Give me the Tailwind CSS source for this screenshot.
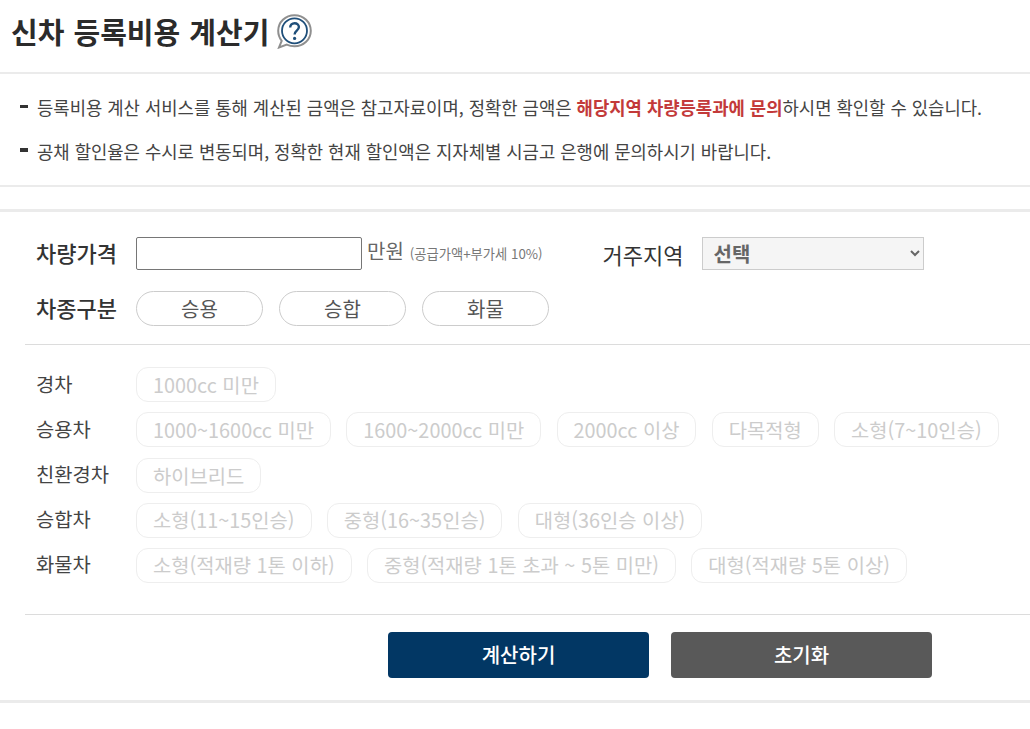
<!DOCTYPE html>
<html lang="ko">
<head>
    <meta charset="UTF-8">
    <title>신차 등록비용 계산기</title>
    <script src="https://cdn.jsdelivr.net/npm/@tailwindcss/browser@4"></script>
</head>
<body class="bg-white text-[#333] font-['Noto_Sans_CJK_KR','Noto_Sans',sans-serif] overflow-hidden">

    <!-- title -->
    <header class="h-[74px] border-b-2 border-[#ebebeb] pl-[11px] pt-[11px] flex items-start gap-[8px]">
        <h1 class="text-[29px] leading-[40px] font-bold text-[#2b2b2b] [word-spacing:1px]">신차 등록비용 계산기</h1>
        <svg class="mt-[3px]" width="35" height="35" viewBox="0 0 35 35" fill="none">
            <path d="M17.500 1.200C8.300 1.200 1.200 8 1.200 16.800c0 3.900 1.300 7.300 3.500 10L2 33.500l7.800-2.900c2.300 1.100 4.900 1.700 7.700 1.700 9.200 0 16.300-6.700 16.300-15.500S26.700 1.200 17.500 1.200z" fill="#fff" stroke="#8f8f8f" stroke-width="2"/>
            <circle cx="17.500" cy="16.800" r="12.500" stroke="#1f4f7a" stroke-width="1.800"/>
            <path d="M13.200 13.600c0-2.600 1.900-4.400 4.400-4.400s4.300 1.600 4.300 3.900c0 3.500-4.300 3.600-4.300 7.300" stroke="#1f4f7a" stroke-width="2.400"/>
            <circle cx="17.600" cy="24.400" r="1.600" fill="#1f4f7a"/>
        </svg>
    </header>

    <!-- notice -->
    <section class="h-[113px] border-b-2 border-[#ebebeb] pl-5 pt-[20px] text-[17.76px] leading-[26px] text-[#444]">
        <p class="flex items-start">
            <span class="w-[8px] h-[3px] bg-[#333] mt-[11px] mr-[9px]"></span>
            <span>등록비용 계산 서비스를 통해 계산된 금액은 참고자료이며, 정확한 금액은 <b class="font-bold text-[#c33a3a]">해당지역 차량등록과에 문의</b>하시면 확인할 수 있습니다.</span>
        </p>
        <p class="flex items-start mt-[18px]">
            <span class="w-[8px] h-[4px] bg-[#333] mt-[10px] mr-[9px]"></span>
            <span>공채 할인율은 수시로 변동되며, 정확한 현재 할인액은 지자체별 시금고 은행에 문의하시기 바랍니다.</span>
        </p>
    </section>

    <!-- form -->
    <section class="mt-[22px] h-[494px] border-y-[3px] border-[#ebebeb] pl-[25px]">
        <div class="h-[133px] border-b border-[#dcdcdc] pl-[11px] pt-[25px]">
            <div class="flex items-center h-[33px]">
                <span class="w-[100px] mb-[2px] text-[22px] font-medium text-[#333]">차량가격</span>
                <input type="text" class="w-[226px] h-[33px] border border-[#767676] rounded-[2px] bg-white">
                <span class="ml-[5px] mb-[6px] text-[20px] text-[#666]">만원</span>
                <span class="ml-[6px] text-[13.3px] text-[#777]">(공급가액+부가세 10%)</span>
                <span class="ml-[60px] w-[99px] mt-[2px] text-[22px] text-[#333]">거주지역</span>
                <select class="w-[222px] h-[33px] border border-[#ccc] bg-[#f5f5f5] pl-[7px] text-[20px] font-bold text-[#666]">
                    <option>선택</option>
                </select>
            </div>
            <div class="flex items-center mt-[21px] h-[35px]">
                <span class="w-[100px] mb-[2px] text-[22px] font-medium text-[#333]">차종구분</span>
                <div class="flex gap-4">
                    <button class="w-[127px] h-[35px] rounded-full border border-[#ccc] bg-white text-[20px] text-[#555]">승용</button>
                    <button class="w-[127px] h-[35px] rounded-full border border-[#ccc] bg-white text-[20px] text-[#555]">승합</button>
                    <button class="w-[127px] h-[35px] rounded-full border border-[#ccc] bg-white text-[20px] text-[#555]">화물</button>
                </div>
            </div>
        </div>

        <div class="h-[270px] border-b border-[#dcdcdc] pl-[11px] pt-[22px] flex flex-col gap-[10px] text-[19.85px]">
            <div class="flex">
                <span class="w-[100px] leading-[33px] text-[#444]">경차</span>
                <div class="flex gap-[15.3px]">
                    <span class="h-[35px] px-4 leading-[33px] rounded-[12px] border border-[#eee] text-[#ccc]">1000cc 미만</span>
                </div>
            </div>
            <div class="flex">
                <span class="w-[100px] leading-[33px] text-[#444]">승용차</span>
                <div class="flex gap-[15.3px]">
                    <span class="h-[35px] px-4 leading-[33px] rounded-[12px] border border-[#eee] text-[#ccc]">1000~1600cc 미만</span>
                    <span class="h-[35px] px-4 leading-[33px] rounded-[12px] border border-[#eee] text-[#ccc]">1600~2000cc 미만</span>
                    <span class="h-[35px] px-4 leading-[33px] rounded-[12px] border border-[#eee] text-[#ccc]">2000cc 이상</span>
                    <span class="h-[35px] px-4 leading-[33px] rounded-[12px] border border-[#eee] text-[#ccc]">다목적형</span>
                    <span class="h-[35px] px-4 leading-[33px] rounded-[12px] border border-[#eee] text-[#ccc]">소형(7~10인승)</span>
                </div>
            </div>
            <div class="flex mt-[1px]">
                <span class="w-[100px] leading-[31px] text-[#444]">친환경차</span>
                <div class="flex gap-[15.3px]">
                    <span class="h-[35px] px-4 leading-[33px] rounded-[12px] border border-[#eee] text-[#ccc]">하이브리드</span>
                </div>
            </div>
            <div class="flex">
                <span class="w-[100px] leading-[31px] text-[#444]">승합차</span>
                <div class="flex gap-[15.3px]">
                    <span class="h-[35px] px-4 leading-[31px] rounded-[12px] border border-[#eee] text-[#ccc]">소형(11~15인승)</span>
                    <span class="h-[35px] px-4 leading-[31px] rounded-[12px] border border-[#eee] text-[#ccc]">중형(16~35인승)</span>
                    <span class="h-[35px] px-4 leading-[31px] rounded-[12px] border border-[#eee] text-[#ccc]">대형(36인승 이상)</span>
                </div>
            </div>
            <div class="flex">
                <span class="w-[100px] leading-[31px] text-[#444]">화물차</span>
                <div class="flex gap-[15.3px]">
                    <span class="h-[35px] px-4 leading-[31px] rounded-[12px] border border-[#eee] text-[#ccc]">소형(적재량 1톤 이하)</span>
                    <span class="h-[35px] px-4 leading-[31px] rounded-[12px] border border-[#eee] text-[#ccc]">중형(적재량 1톤 초과 ~ 5톤 미만)</span>
                    <span class="h-[35px] px-4 leading-[31px] rounded-[12px] border border-[#eee] text-[#ccc]">대형(적재량 5톤 이상)</span>
                </div>
            </div>
        </div>

        <div class="flex pt-[17px] pl-[363px] gap-[22px]">
            <button class="w-[261px] h-[46px] rounded-[4px] bg-[#023764] text-white text-[20px] font-medium">계산하기</button>
            <button class="w-[261px] h-[46px] rounded-[4px] bg-[#595959] text-white text-[20px] font-medium">초기화</button>
        </div>
    </section>
</body>
</html>
